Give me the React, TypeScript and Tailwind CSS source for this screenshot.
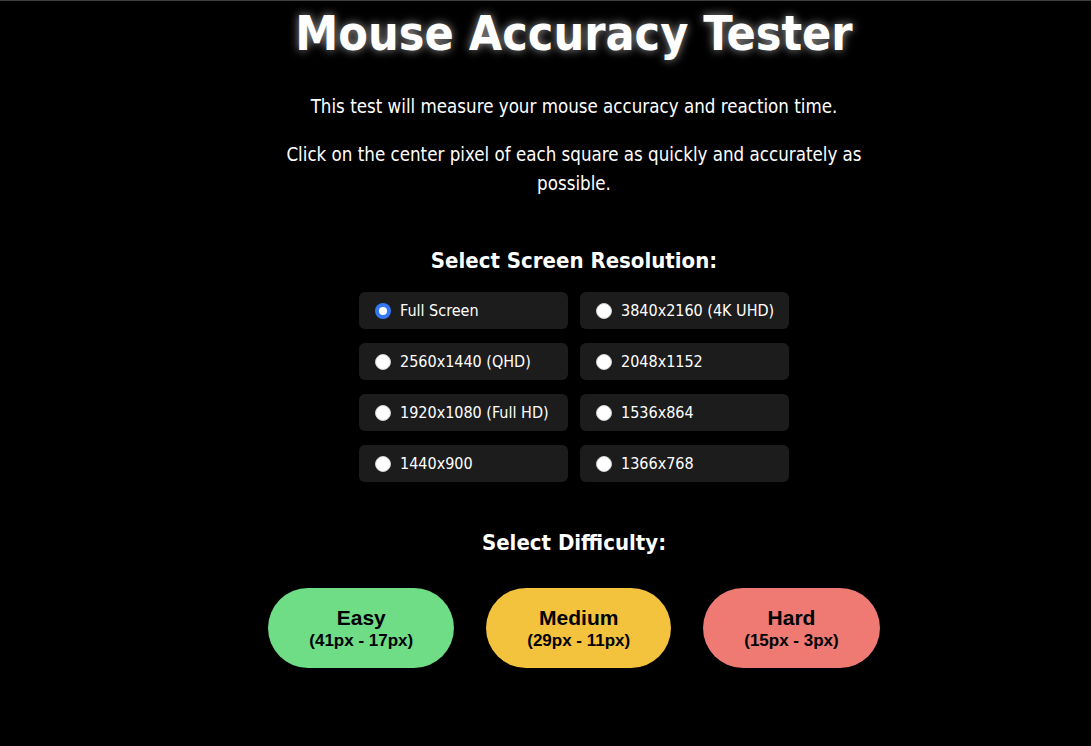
import { useState } from 'react'

const resolutions = [
  'Full Screen',
  '3840x2160 (4K UHD)',
  '2560x1440 (QHD)',
  '2048x1152',
  '1920x1080 (Full HD)',
  '1536x864',
  '1440x900',
  '1366x768',
]

const difficulties = [
  { name: 'Easy', range: '(41px - 17px)', color: 'bg-[#6fdc86]' },
  { name: 'Medium', range: '(29px - 11px)', color: 'bg-[#f4c33e]' },
  { name: 'Hard', range: '(15px - 3px)', color: 'bg-[#ee7a73]' },
]

const tahoma = "font-['Tahoma','DejaVu_Sans_Condensed','DejaVu_Sans',sans-serif]"

export default function App() {
  const [selected, setSelected] = useState('Full Screen')

  return (
    <div className={`min-h-[746px] bg-black text-white border-t border-[#3c3c3c] pl-[57px] ${tahoma}`}>
      <div className="flex flex-col items-center">
        <h1 className="mt-[2px] text-[48px] leading-[60px] font-bold [text-shadow:0_0_10px_rgba(255,255,255,0.6)]">
          Mouse Accuracy Tester
        </h1>

        <p className="mt-[29px] text-[18.6px] leading-[29px] text-center">
          This test will measure your mouse accuracy and reaction time.
        </p>
        <p className="mt-[19px] max-w-[600px] text-[18.6px] leading-[29px] text-center">
          Click on the center pixel of each square as quickly and accurately as possible.
        </p>

        <h2 className="mt-[48px] text-[22px] leading-[30px] font-bold">Select Screen Resolution:</h2>

        <div className="mt-[16px] grid grid-cols-2 gap-x-[12px] gap-y-[14px] w-[430px]">
          {resolutions.map(r => (
            <label
              key={r}
              onClick={() => setSelected(r)}
              className="h-[37px] flex items-center gap-[9px] pl-[16px] rounded-[6px] bg-[#1c1c1c] cursor-pointer text-[16px]"
            >
              {selected === r ? (
                <span className="w-[16px] h-[16px] rounded-full bg-[#3478f6] flex items-center justify-center">
                  <span className="w-[8px] h-[8px] rounded-full bg-white" />
                </span>
              ) : (
                <span className="w-[16px] h-[16px] rounded-full bg-white border border-[#cfcfcf]" />
              )}
              <span>{r}</span>
            </label>
          ))}
        </div>

        <h2 className="mt-[46px] text-[22px] leading-[30px] font-bold">Select Difficulty:</h2>

        <div className="mt-[30px] flex gap-[32px]">
          {difficulties.map(d => (
            <button
              key={d.name}
              className={`${d.color} h-[80px] px-[41px] rounded-full text-black font-['Liberation_Sans',Arial,sans-serif] font-bold flex flex-col items-center justify-center`}
            >
              <span className="text-[21px] leading-[25px]">{d.name}</span>
              <span className="text-[17px] leading-[22px]">{d.range}</span>
            </button>
          ))}
        </div>
      </div>
    </div>
  )
}
